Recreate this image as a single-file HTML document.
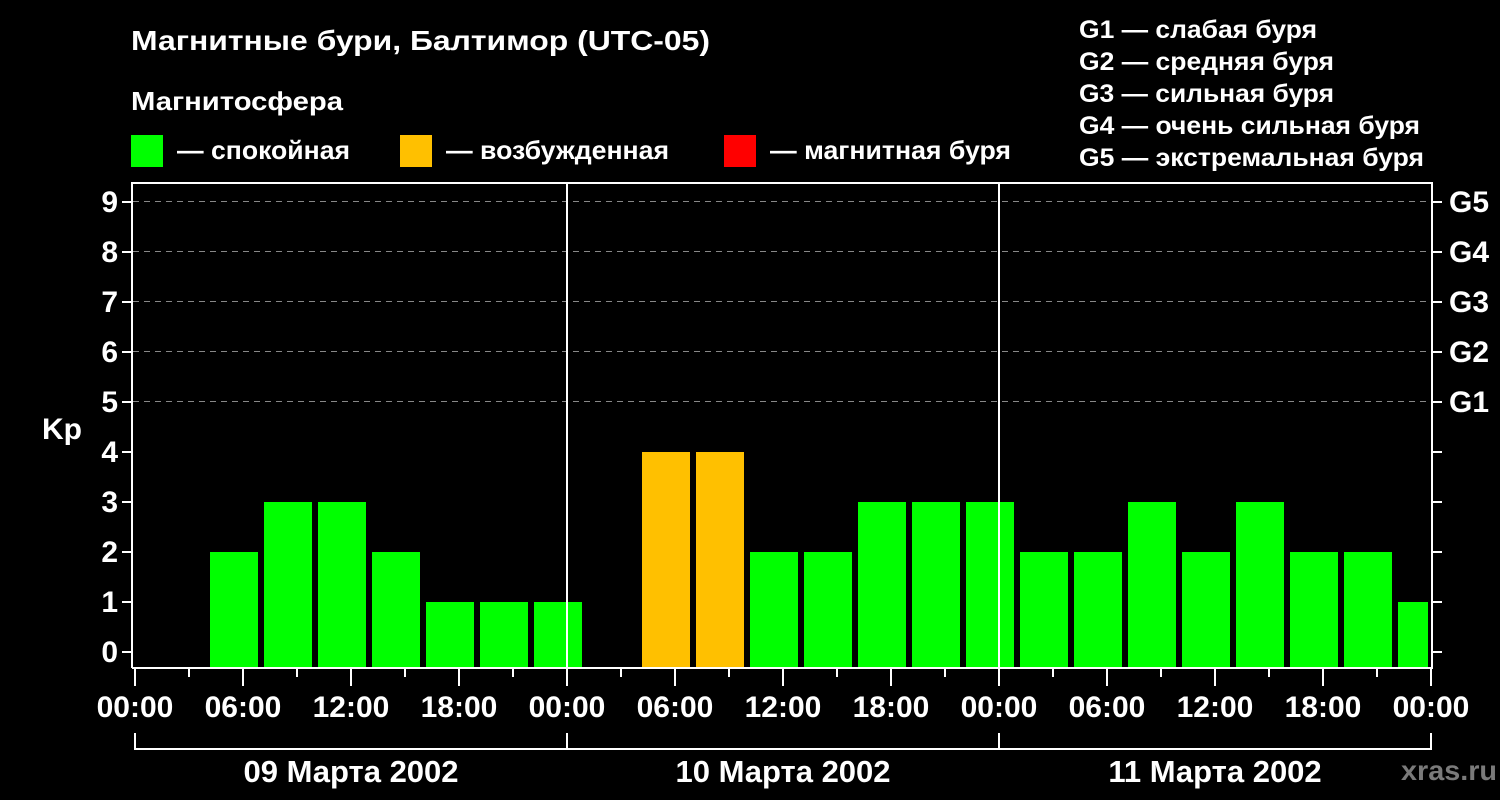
<!DOCTYPE html>
<html><head><meta charset="utf-8"><style>
html,body{margin:0;padding:0;background:#000;width:1500px;height:800px;overflow:hidden}
svg{display:block}
text{font-family:"Liberation Sans",sans-serif;font-weight:bold;fill:#fff}
</style></head><body>
<svg width="1500" height="800" viewBox="0 0 1500 800">
<text x="131" y="50" font-size="28" textLength="579" lengthAdjust="spacingAndGlyphs">Магнитные бури, Балтимор (UTC-05)</text>
<text x="131" y="110" font-size="26" textLength="212" lengthAdjust="spacingAndGlyphs">Магнитосфера</text>
<rect x="131" y="135" width="32" height="32" fill="#00ff00"/>
<text x="177" y="159" font-size="26" textLength="173" lengthAdjust="spacingAndGlyphs">— спокойная</text>
<rect x="400" y="135" width="32" height="32" fill="#ffc000"/>
<text x="446" y="159" font-size="26" textLength="223" lengthAdjust="spacingAndGlyphs">— возбужденная</text>
<rect x="724" y="135" width="32" height="32" fill="#ff0000"/>
<text x="770" y="159" font-size="26" textLength="241" lengthAdjust="spacingAndGlyphs">— магнитная буря</text>
<g font-size="25">
<text x="1079" y="38" textLength="238" lengthAdjust="spacingAndGlyphs">G1 — слабая буря</text>
<text x="1079" y="70" textLength="255" lengthAdjust="spacingAndGlyphs">G2 — средняя буря</text>
<text x="1079" y="102" textLength="255" lengthAdjust="spacingAndGlyphs">G3 — сильная буря</text>
<text x="1079" y="134" textLength="341" lengthAdjust="spacingAndGlyphs">G4 — очень сильная буря</text>
<text x="1079" y="166" textLength="345" lengthAdjust="spacingAndGlyphs">G5 — экстремальная буря</text>
</g>
<g stroke="#888" stroke-width="1" stroke-dasharray="6,5">
<line x1="133" y1="201.5" x2="1431" y2="201.5"/>
<line x1="133" y1="251.5" x2="1431" y2="251.5"/>
<line x1="133" y1="301.5" x2="1431" y2="301.5"/>
<line x1="133" y1="351.5" x2="1431" y2="351.5"/>
<line x1="133" y1="401.5" x2="1431" y2="401.5"/>
</g>
<g fill="#00ff00">
<rect x="210" y="552" width="48" height="116"/>
<rect x="264" y="502" width="48" height="166"/>
<rect x="318" y="502" width="48" height="166"/>
<rect x="372" y="552" width="48" height="116"/>
<rect x="426" y="602" width="48" height="66"/>
<rect x="480" y="602" width="48" height="66"/>
<rect x="534" y="602" width="48" height="66"/>
<rect x="750" y="552" width="48" height="116"/>
<rect x="804" y="552" width="48" height="116"/>
<rect x="858" y="502" width="48" height="166"/>
<rect x="912" y="502" width="48" height="166"/>
<rect x="966" y="502" width="48" height="166"/>
<rect x="1020" y="552" width="48" height="116"/>
<rect x="1074" y="552" width="48" height="116"/>
<rect x="1128" y="502" width="48" height="166"/>
<rect x="1182" y="552" width="48" height="116"/>
<rect x="1236" y="502" width="48" height="166"/>
<rect x="1290" y="552" width="48" height="116"/>
<rect x="1344" y="552" width="48" height="116"/>
<rect x="1398" y="602" width="30" height="66"/>
</g>
<g fill="#ffc000">
<rect x="642" y="452" width="48" height="216"/>
<rect x="696" y="452" width="48" height="216"/>
</g>
<g stroke="#fff" stroke-width="2" fill="none">
<polyline points="132,668 132,183 1432,183 1432,668 132,668"/>
<line x1="567" y1="183" x2="567" y2="668"/>
<line x1="999" y1="183" x2="999" y2="668"/>
<path d="M122 202H132M122 252H132M122 302H132M122 352H132M122 402H132M122 452H132M122 502H132M122 552H132M122 602H132M122 652H132"/>
<path d="M1432 202H1442M1432 252H1442M1432 302H1442M1432 352H1442M1432 402H1442M1432 452H1442M1432 502H1442M1432 552H1442M1432 602H1442M1432 652H1442"/>
<path d="M135 668V686M243 668V686M351 668V686M459 668V686M567 668V686M675 668V686M783 668V686M891 668V686M999 668V686M1107 668V686M1215 668V686M1323 668V686M1431 668V686"/>
<path d="M189 668V677M297 668V677M405 668V677M513 668V677M621 668V677M729 668V677M837 668V677M945 668V677M1053 668V677M1161 668V677M1269 668V677M1377 668V677"/>
<path d="M135 733V749H1431V733M567 733V749M999 733V749"/>
</g>
<g font-size="30" text-anchor="end">
<text x="118" y="212">9</text><text x="118" y="262">8</text><text x="118" y="312">7</text><text x="118" y="362">6</text><text x="118" y="412">5</text><text x="118" y="462">4</text><text x="118" y="512">3</text><text x="118" y="562">2</text><text x="118" y="612">1</text><text x="118" y="662">0</text>
</g>
<text x="42" y="439" font-size="30">Kp</text>
<g font-size="30">
<text x="1449" y="212">G5</text><text x="1449" y="262">G4</text><text x="1449" y="312">G3</text><text x="1449" y="362">G2</text><text x="1449" y="412">G1</text>
</g>
<g font-size="30" text-anchor="middle">
<text x="135" y="717">00:00</text><text x="243" y="717">06:00</text><text x="351" y="717">12:00</text><text x="459" y="717">18:00</text>
<text x="567" y="717">00:00</text><text x="675" y="717">06:00</text><text x="783" y="717">12:00</text><text x="891" y="717">18:00</text>
<text x="999" y="717">00:00</text><text x="1107" y="717">06:00</text><text x="1215" y="717">12:00</text><text x="1323" y="717">18:00</text>
<text x="1431" y="717">00:00</text>
<text x="351" y="782" font-size="31">09 Марта 2002</text>
<text x="783" y="782" font-size="31">10 Марта 2002</text>
<text x="1215" y="782" font-size="31">11 Марта 2002</text>
</g>
<text x="1401" y="780" font-size="28" textLength="96" lengthAdjust="spacingAndGlyphs" style="fill:#7a7a7a">xras.ru</text>
</svg>
</body></html>
